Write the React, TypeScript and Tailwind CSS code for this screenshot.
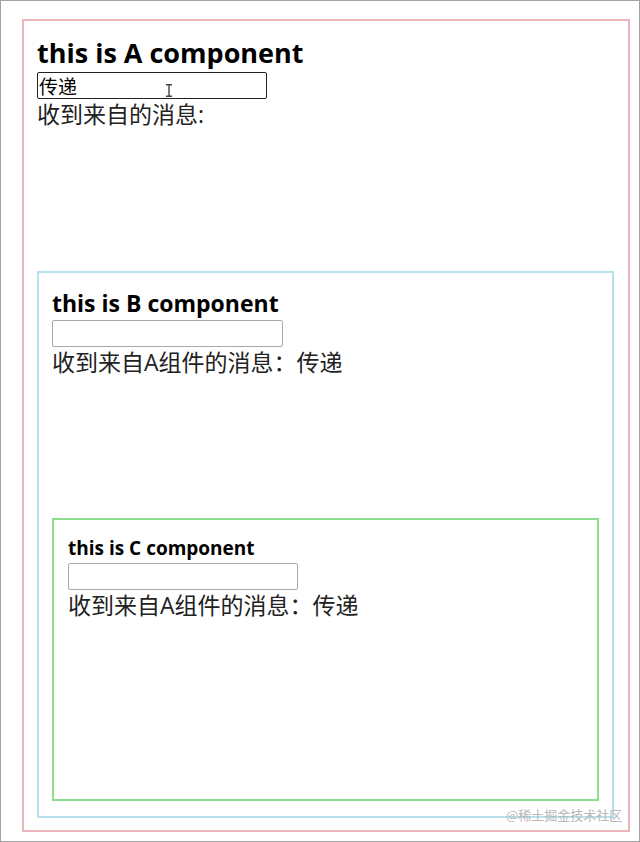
import React from "react";

const font = { fontFamily: '"Open Sans", "Noto Sans CJK SC", sans-serif' };

export default function App() {
  return (
    <div
      className="w-[640px] h-[842px] border border-[#a3a3a3] bg-white pt-[18px] pl-[21px] pr-[9px] relative"
      style={font}
    >
      <div className="h-[813px] border-2 border-[#eab5bb] pl-[13px] pr-[14px] pt-[13px]">
        <h1 className="text-[27px] leading-[38px] font-bold text-black">this is A component</h1>
        <input
          readOnly
          value="传递"
          className="block w-[230px] h-[27px] border-[1.5px] border-[#222] rounded-[2px] px-[1px] text-[19px] leading-[24px] text-black outline-none"
          style={font}
        />
        <p className="text-[23px] leading-[31px] text-[#222]">收到来自的消息:</p>
        <div className="mt-[141px] h-[547px] border-2 border-[#b5e2ec] px-[13px] pt-[13px]">
          <h2 className="text-[23px] leading-[34px] font-bold text-black">this is B component</h2>
          <input readOnly className="block w-[231px] h-[27px] border border-[#a8a8a8] rounded-[2px] outline-none" />
          <p className="text-[23px] leading-[30px] text-[#222]">收到来自A组件的消息：传递</p>
          <div className="mt-[141px] h-[283px] border-2 border-[#8fdb8f] px-[14px] pt-[13px]">
            <h3 className="text-[19px] leading-[30px] font-bold text-black">this is C component</h3>
            <input readOnly className="block w-[230px] h-[27px] border border-[#a8a8a8] rounded-[2px] outline-none" />
            <p className="text-[23px] leading-[30px] text-[#222]">收到来自A组件的消息：传递</p>
          </div>
        </div>
      </div>
      <div className="absolute left-[505px] top-[804px] text-[13px] text-[#b8b8b8]" style={{ fontFamily: '"Noto Sans CJK SC", sans-serif' }}>
        @稀土掘金技术社区
      </div>
      <svg className="absolute left-[164px] top-[83px]" width="8" height="13" viewBox="0 0 8 13">
        <path d="M1 0.75H7M1 12.25H7M4 0.75V12.25" stroke="#444" strokeWidth="1.4" fill="none" />
      </svg>
    </div>
  );
}
